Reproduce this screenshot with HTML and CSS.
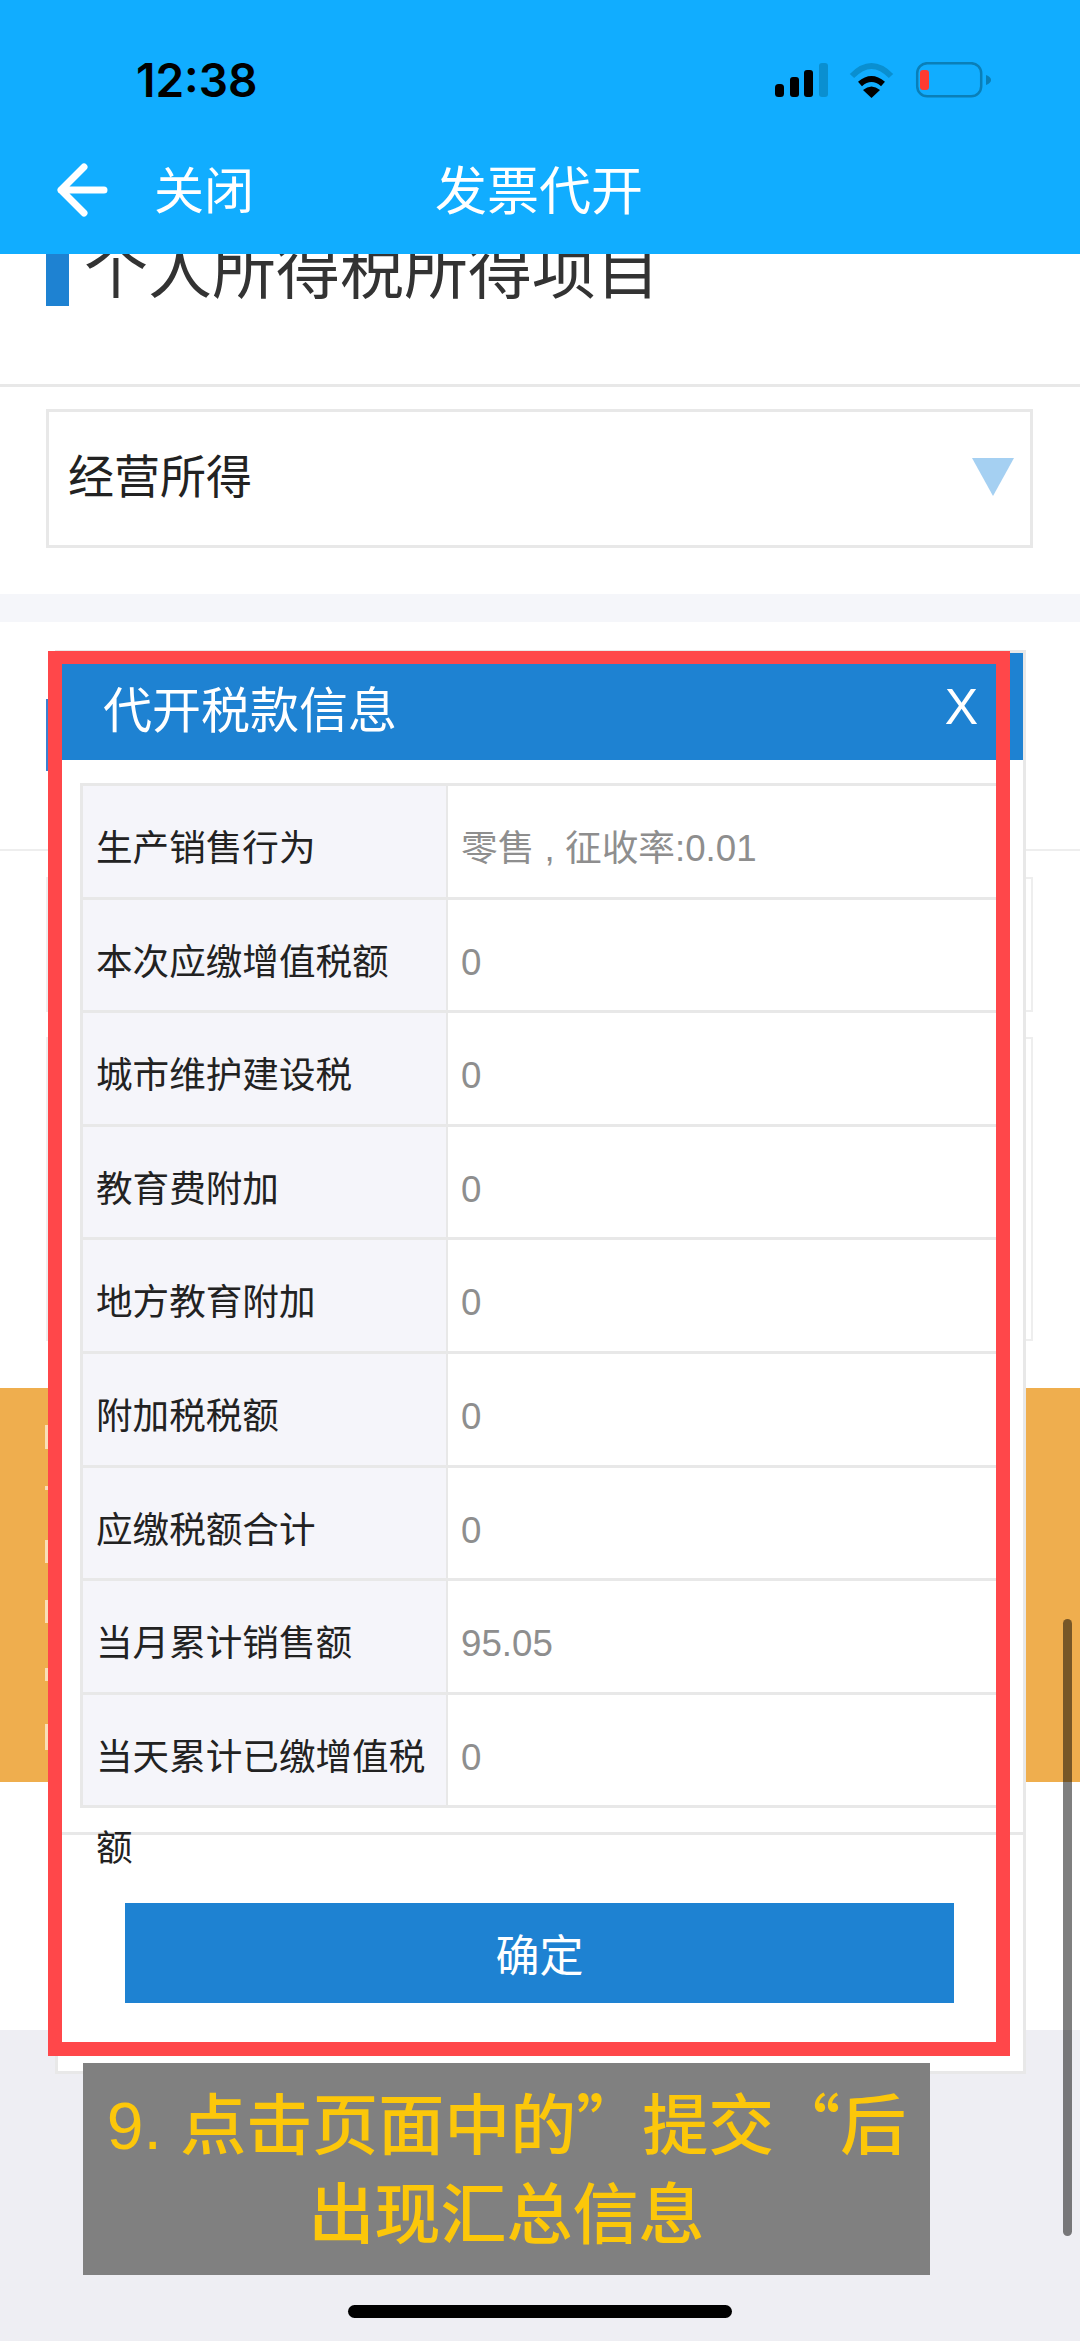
FILE: index.html
```html
<!doctype html>
<html lang="zh-CN">
<head>
  <meta charset="utf-8" />
  <meta name="viewport" content="width=device-width,initial-scale=1" />
  <title>发票代开</title>
  <link rel="stylesheet" href="styles.css">
</head>
<body>
  <div class="phone">
    <header class="top">
      <div class="status">
        <span class="time">12:38</span>
        <svg class="status-icons" width="216" height="36" viewBox="0 0 216 36">
          <rect x="0" y="22" width="9" height="13" rx="3.5" fill="#000"/>
          <rect x="15" y="15" width="9" height="20" rx="3" fill="#000"/>
          <rect x="29" y="8" width="9" height="27" rx="3" fill="#000"/>
          <rect x="44" y="1" width="9" height="34" rx="3" fill="#0a8fd0"/>
          <path d="M77 14 Q96.5 -6 116 14" fill="none" stroke="#0a8fd0" stroke-width="6"/>
          <path d="M85 22 Q96.5 12 108 22" fill="none" stroke="#000" stroke-width="6"/>
          <path d="M88 28 Q96.5 21 105 28 L96.5 36 Z" fill="#000"/>
          <rect x="142.2" y="1.2" width="64" height="33" rx="10" fill="none" stroke="#0a7fb8" stroke-width="2.5"/>
          <rect x="145" y="8" width="9" height="20" rx="3" fill="#ff3b30"/>
          <path d="M211 13 Q216 15 216 18 Q216 21 211 23 Z" fill="#0a7fb8"/>
        </svg>
      </div>
      <nav class="nav">
        <svg class="back" width="56" height="56" viewBox="0 0 56 56">
          <path d="M5 28 L28 5 M5 28 L28 51 M5 28 L48 28" fill="none" stroke="#fff" stroke-width="7" stroke-linecap="round" stroke-linejoin="round"/>
        </svg>
        <span class="close">关闭</span>
        <span class="nav-title">发票代开</span>
      </nav>
    </header>

    <section class="sec-title">
      <div class="sec-head"><i class="bar"></i><h1>个人所得税所得项目</h1></div>
    </section>

    <section class="select-wrap">
      <div class="select"><span>经营所得</span><i class="caret"></i></div>
    </section>

    <div class="band"></div>

    <section class="sec-hidden"><i class="bar bar-small"></i></section>

    <section class="fields">
      <div class="field field-a"></div>
      <div class="field field-b"></div>
    </section>

    <section class="orange">
      <!-- 弹窗左边露出的一点白字 -->
      <svg class="marks" width="4" height="394" viewBox="0 0 4 394">
        <rect y="37" width="3" height="24" fill="#fff" opacity=".6"/>
        <rect y="98" width="3" height="4" fill="#fff" opacity=".6"/>
        <rect y="152" width="3" height="23" fill="#fff" opacity=".6"/>
        <rect y="212" width="3" height="23" fill="#fff" opacity=".6"/>
        <rect y="280" width="3" height="13" fill="#fff" opacity=".6"/>
        <rect y="336" width="3" height="26" fill="#fff" opacity=".6"/>
      </svg>
    </section>
    <section class="blank"></section>
    <footer class="bottom"><i class="home"></i></footer>

    <!-- 弹窗 -->
    <div class="modal">
      <div class="modal-head"><span>代开税款信息</span><span class="modal-x">X</span></div>
      <div class="tbl">
        <div class="row"><div class="k">生产销售行为</div><div class="v">零售 , 征收率:0.01</div></div>
        <div class="row"><div class="k">本次应缴增值税额</div><div class="v">0</div></div>
        <div class="row"><div class="k">城市维护建设税</div><div class="v">0</div></div>
        <div class="row"><div class="k">教育费附加</div><div class="v">0</div></div>
        <div class="row"><div class="k">地方教育附加</div><div class="v">0</div></div>
        <div class="row"><div class="k">附加税税额</div><div class="v">0</div></div>
        <div class="row"><div class="k">应缴税额合计</div><div class="v">0</div></div>
        <div class="row"><div class="k">当月累计销售额</div><div class="v">95.05</div></div>
        <div class="row"><div class="k">当天累计已缴增值税额</div><div class="v">0</div></div>
      </div>
      <div class="modal-foot"><button type="button" class="ok">确定</button></div>
    </div>

    <div class="red-frame"></div>
    <div class="caption"><p>9. 点击页面中的<span class="q">”</span>提交<span class="q">“</span>后<br>出现汇总信息</p></div>
    <div class="scroll"></div>
  </div>
</body>
</html>
```

FILE: styles.css
```css
:root{--top:#11adff;--blue:#1e82d2;--line:#e8e8e8;--cjk:"Liberation Sans","Noto Sans CJK SC",sans-serif}
*{box-sizing:border-box}
body{margin:0;font-family:var(--cjk);color:#222}
.phone{position:relative;width:1080px;height:2341px;overflow:hidden;background:#fff;display:flex;flex-direction:column}

.top{position:relative;z-index:1;height:254px;flex:none;background:var(--top);padding-top:60px}
.status{height:40px;display:flex;align-items:center;justify-content:space-between;padding:0 89px 0 136px}
.time{font-family:Inter,sans-serif;font-weight:600;font-size:46px;color:#000}
.nav{height:60px;margin-top:60px;display:flex;align-items:center;padding-left:56px;color:#fff}
.close{font-size:50px;margin:0 0 6px 42px}
.nav-title{font-size:52px;margin:0 0 6px 181px}

.sec-title{height:133px;flex:none;overflow:hidden;padding-left:46px;border-bottom:3px solid var(--line)}
.sec-head{display:flex;gap:15px;margin-top:-14px;height:66px}
.bar{display:block;width:23px;background:var(--blue)}
.sec-head h1{margin:0;font-weight:400;font-size:64px;line-height:63px;color:#333}

.select-wrap{height:207px;flex:none;padding:22px 47px 0 46px}
.select{height:139px;border:3px solid var(--line);display:flex;align-items:center;justify-content:space-between;padding:0 16px 12px 19px;font-size:46px;color:#222}
.caret{width:0;height:0;border-style:solid;border-width:38px 21px 0;border-color:#a5d0f2 transparent transparent;margin-top:8px}

.band{height:28px;flex:none;background:#f5f6fa}

.sec-hidden{height:229px;flex:none;padding:77px 0 0 46px;border-bottom:2px solid #eee}
.bar-small{height:72px;background:#3b7fd0}

.fields{height:537px;flex:none;padding:26px 47px 0 46px;display:flex;flex-direction:column;gap:25px}
.field{border:2px solid #eee}
.field-a{height:135px}
.field-b{height:304px}

.orange{height:394px;flex:none;background:#efae4e;padding-left:45px}
.marks{display:block}
.blank{height:248px;flex:none}
.bottom{flex:1;background:#eeeef3;display:flex;align-items:flex-end;justify-content:center;padding-bottom:23px}
.home{width:384px;height:13px;border-radius:7px;background:#000}

.modal{position:absolute;left:55px;top:650px;width:971px;background:#fff;border:3px solid var(--line)}
.modal-head{height:107px;background:var(--blue);color:#fff;display:flex;align-items:center;justify-content:space-between;padding:0 45px 0 45px;font-size:49px}
.modal-x{font-size:50px}
.tbl{margin:23px 22px 0;border:solid var(--line);border-width:3px 0 0 3px}
.row{display:grid;grid-template-columns:365px 1fr;grid-template-rows:minmax(0,1fr);height:113.6px;border-bottom:3px solid var(--line)}
.k{background:#f5f5fa;padding:17px 0 0 13px;font-size:36.6px;line-height:91px;border-right:2px solid var(--line)}
.v{padding:17px 0 0 13px;font-size:36.7px;line-height:91px;color:#8e8e8e}
.modal-foot{margin-top:24px;border-top:3px solid var(--line);padding:68px 69px 68px 67px}
.ok{display:block;width:100%;height:100px;border:0;background:var(--blue);color:#fff;font-family:var(--cjk);font-size:44px}

.red-frame{position:absolute;left:48px;top:651px;width:962px;height:1405px;border:solid #ff474a;border-width:13px 14px 14px}
.caption{position:absolute;left:83px;top:2063px;width:847px;height:212px;background:#808080;color:#fcc70a;display:flex;align-items:center;justify-content:center;text-align:center}
.caption p{margin:0 0 3px;font-size:66px;line-height:89px;font-weight:500}
.q{font-family:"Noto Sans CJK SC",sans-serif}
.scroll{position:absolute;left:1063px;top:1619px;width:9px;height:617px;border-radius:5px;background:rgba(0,0,0,.5)}
```
